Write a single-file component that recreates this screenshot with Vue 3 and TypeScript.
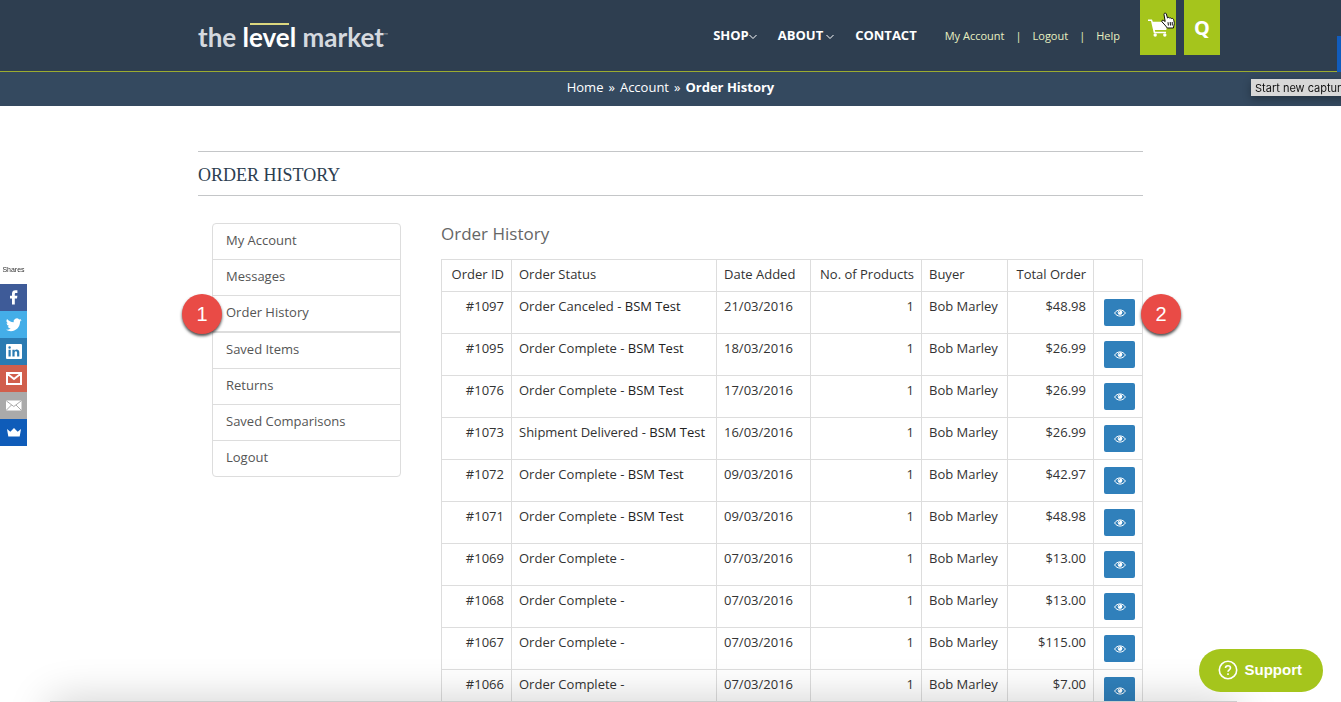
<script setup lang="ts">
interface Order {
  id: string
  status: string
  note: string
  date: string
  total: string
}

const orders: Order[] = [
  { id: '#1097', status: 'Order Canceled - ', note: 'BSM Test', date: '21/03/2016', total: '$48.98' },
  { id: '#1095', status: 'Order Complete - ', note: 'BSM Test', date: '18/03/2016', total: '$26.99' },
  { id: '#1076', status: 'Order Complete - ', note: 'BSM Test', date: '17/03/2016', total: '$26.99' },
  { id: '#1073', status: 'Shipment Delivered - ', note: 'BSM Test', date: '16/03/2016', total: '$26.99' },
  { id: '#1072', status: 'Order Complete - ', note: 'BSM Test', date: '09/03/2016', total: '$42.97' },
  { id: '#1071', status: 'Order Complete - ', note: 'BSM Test', date: '09/03/2016', total: '$48.98' },
  { id: '#1069', status: 'Order Complete -', note: '', date: '07/03/2016', total: '$13.00' },
  { id: '#1068', status: 'Order Complete -', note: '', date: '07/03/2016', total: '$13.00' },
  { id: '#1067', status: 'Order Complete -', note: '', date: '07/03/2016', total: '$115.00' },
  { id: '#1066', status: 'Order Complete -', note: '', date: '07/03/2016', total: '$7.00' },
]

const accountLinks: string[] = [
  'My Account',
  'Messages',
  'Order History',
  'Saved Items',
  'Returns',
  'Saved Comparisons',
  'Logout',
]
</script>

<template>
  <div class="page">
    <header class="header">
      <div class="container header-row">
        <a class="logo" href="#"><span>the </span><span class="level">level</span><span> market</span><sup>™</sup></a>
        <nav class="main-nav">
          <a class="shop" href="#">SHOP<svg viewBox="0 0 8 6"><path d="M.5 1 4 4.5 7.500 1" /></svg></a>
          <a class="about" href="#">ABOUT<svg viewBox="0 0 8 6"><path d="M.5 1 4 4.500 7.500 1" /></svg></a>
          <a class="contact" href="#">CONTACT</a>
        </nav>
        <nav class="user-nav">
          <a href="#">My Account</a><i>|</i><a href="#">Logout</a><i>|</i><a href="#">Help</a>
        </nav>
        <div class="tools">
          <button class="tool" type="button" aria-label="Cart">
            <svg class="cart" viewBox="0 0 20 18">
              <path d="M0 .5h4l.8 2.200H19.500L18.300 11H6.800l.4 1.700H18v1.500H5.800L3 2H0z" />
              <circle cx="7.200" cy="16" r="1.700" />
              <circle cx="16.800" cy="16" r="1.700" />
            </svg>
            <svg class="pointer" viewBox="0 0 14 17">
              <path d="M3 2.500c-.2-1.600 1.800-2 2.300-.6L6.500 6c.6-.9 1.700-.6 2 .1.700-.6 1.700-.2 1.900.5.9-.5 1.900 0 2.100.8.500 1.700 1.200 3.800.5 5.700l-.6 2.900H6.300C5 13.800 3 12.200 1 9.900c-1-1.300.6-2.100 1.600-1.400l1.600 1z" />
              <path d="M7 10.200l.4 3.300M9.200 10l.3 3.500M11.200 10l.1 3.500" />
            </svg>
          </button>
          <button class="tool" type="button">Q</button>
        </div>
      </div>
    </header>

    <nav class="crumbs" aria-label="Breadcrumb">
      <a href="#">Home</a><span>»</span><a href="#">Account</a><span>»</span><strong>Order History</strong>
    </nav>

    <main class="container">
      <h1>ORDER HISTORY</h1>
      <div class="columns">
        <ul class="side">
          <li v-for="(link, i) in accountLinks" :key="link" :class="{ current: i === 2 }">
            <a href="#">{{ link }}</a>
            <span v-if="i === 2" class="marker marker-left">1</span>
          </li>
        </ul>
        <section class="history">
          <h2>Order History</h2>
          <table>
            <colgroup>
              <col class="c-id" /><col /><col class="c-date" /><col class="c-count" />
              <col class="c-buyer" /><col class="c-total" /><col class="c-view" />
            </colgroup>
            <thead>
              <tr>
                <th class="right">Order ID</th>
                <th>Order Status</th>
                <th>Date Added</th>
                <th class="right">No. of Products</th>
                <th>Buyer</th>
                <th class="right">Total Order</th>
                <th></th>
              </tr>
            </thead>
            <tbody>
              <tr v-for="(o, i) in orders" :key="o.id">
                <td class="right">{{ o.id }}</td>
                <td>{{ o.status }}<span class="note">{{ o.note }}</span></td>
                <td>{{ o.date }}</td>
                <td class="right">1</td>
                <td>Bob Marley</td>
                <td class="right">{{ o.total }}</td>
                <td class="view-cell">
                  <a class="view" href="#" :aria-label="'View ' + o.id">
                    <svg viewBox="0 0 12 8">
                      <path d="M.6 4C3.200-.1 8.800-.1 11.400 4 8.800 8.100 3.200 8.100.6 4z" />
                      <circle cx="6" cy="3.600" r="2.300" />
                      <path class="glint" d="M4.700 3.600c0-.8.600-1.300 1.300-1.300" />
                    </svg>
                  </a>
                  <span v-if="i === 0" class="marker marker-right">2</span>
                </td>
              </tr>
            </tbody>
          </table>
        </section>
      </div>
    </main>

    <aside class="share">
      <p>Shares</p>
      <a class="fb" href="#" aria-label="Facebook">
        <svg viewBox="0 0 27 27"><path d="M12 20.500V14.500h-2V11.800h2V9.800c0-2.400 1.300-3.500 3.400-3.500h2V9h-1.400c-.9 0-1.200.4-1.200 1.200v1.600h2.600l-.4 2.700h-2.200v6z" /></svg>
      </a>
      <a class="tw" href="#" aria-label="Twitter">
        <svg viewBox="0 0 24 24"><path transform="translate(5.300 5.300) scale(.58)" d="M23.950 4.570a10 10 0 0 1-2.820.77 4.960 4.960 0 0 0 2.160-2.720c-.95.550-2 .95-3.130 1.180a4.920 4.920 0 0 0-8.380 4.480C7.690 8.090 4.070 6.130 1.640 3.160a4.920 4.920 0 0 0 1.520 6.570 4.900 4.900 0 0 1-2.230-.61v.06a4.920 4.920 0 0 0 3.950 4.830 5 5 0 0 1-2.210.08 4.940 4.940 0 0 0 4.600 3.420A9.870 9.870 0 0 1 0 19.540a14 14 0 0 0 7.550 2.210c9.050 0 14-7.500 14-13.980 0-.21 0-.42-.02-.63a9.940 9.940 0 0 0 2.460-2.550z" /></svg>
      </a>
      <a class="in" href="#" aria-label="LinkedIn">
        <svg viewBox="0 0 27 27"><path fill-rule="evenodd" d="M7 6h14a1 1 0 0 1 1 1v13a1 1 0 0 1-1 1H7a1 1 0 0 1-1-1V7a1 1 0 0 1 1-1zm1.500 5.700v6.800h2.200v-6.800zM9.600 8.300a1.200 1.200 0 1 0 0 2.500 1.200 1.200 0 0 0 0-2.500zm2.800 3.400v6.800h2.200v-3.600c0-2 2.500-2.100 2.500 0v3.600h2.200v-4.200c0-3.300-3.500-3.400-4.700-1.600v-1z" /></svg>
      </a>
      <a class="gm" href="#" aria-label="Gmail">
        <svg class="line" viewBox="0 0 27 27"><path d="M7 8h14v11H7zM7 8.500l7 5.500 7-5.500" /></svg>
      </a>
      <a class="ml" href="#" aria-label="Email">
        <svg viewBox="0 0 27 27"><rect x="6" y="8.500" width="15.500" height="10" rx="1" /><path class="fold" d="M6.500 9l7.300 5.500L21 9M6.500 18l5-5M21 18l-5-5" /></svg>
      </a>
      <a class="sm" href="#" aria-label="SumoMe">
        <svg viewBox="0 0 27 27"><path d="M7 10l3.300 2.800L14 9l3.700 3.800L21 10l-1.300 7.500H8.300z" /></svg>
      </a>
    </aside>

    <div class="edge-tab"></div>
    <div class="tooltip" role="tooltip">Start new capture</div>
    <div class="bottom-shade"></div>

    <button class="support" type="button">
      <svg viewBox="0 0 20 20"><circle cx="10" cy="10" r="8.700" /><path d="M7.500 8.100c0-3.300 5-3.100 5-.2 0 1.900-2.500 1.900-2.500 3.800M10 13.300v1.700" /></svg>
      Support
    </button>
  </div>
</template>

<style>
body {
  margin: 0;
  background: #fff;
}
</style>

<style scoped>
.page {
  position: relative;
  height: 100vh;
  overflow: hidden;
  font: 13px/18px "Open Sans", "Noto Sans", sans-serif;
  color: #333;
}
a {
  color: inherit;
  text-decoration: none;
}
button {
  border: 0;
  padding: 0;
  font: inherit;
}
.container {
  box-sizing: border-box;
  width: 100%;
  max-width: 945px;
  margin: 0 auto;
}
.header {
  height: 71px;
  background: #2e3e50;
  border-bottom: 1px solid #9bab30;
}
.header-row {
  display: flex;
  align-items: flex-start;
  color: #fff;
}
.logo {
  margin-right: auto;
  padding-top: 22px;
  font: bold 26px/30px Lato, sans-serif;
  color: #d5d9df;
  white-space: pre;
}
.logo .level {
  position: relative;
  color: #fff;
}
.logo .level::before {
  content: "";
  position: absolute;
  top: 2px;
  left: 7px;
  right: 7px;
  height: 2px;
  background: #dbd77f;
}
.logo sup {
  font-size: 6px;
  line-height: 6px;
  color: #8c96a1;
}
.main-nav {
  display: flex;
  gap: 21px;
  padding-top: 26px;
  margin-right: 28px;
  font-weight: bold;
}
.main-nav svg {
  width: 8px;
  height: 6px;
  fill: none;
  stroke: #fff;
}
.about svg {
  margin-left: 3px;
}
.user-nav {
  display: flex;
  gap: 11px;
  padding-top: 27px;
  margin-right: 20px;
  font-size: 11px;
  color: #e8f0c0;
}
.user-nav i {
  font-style: normal;
}
.tools {
  display: flex;
  gap: 8px;
  margin-right: -77px;
}
.tool {
  position: relative;
  width: 36px;
  height: 55px;
  background: #a5c51c;
  color: #fff;
  font: bold 20px/55px "Noto Sans", sans-serif;
}
.cart {
  display: block;
  width: 20px;
  height: 18px;
  margin: 0 auto;
  fill: #fff;
}
.pointer {
  position: absolute;
  left: 21px;
  top: 12px;
  width: 14px;
  height: 17px;
  fill: #fff;
  stroke: #111;
}
.crumbs {
  display: flex;
  justify-content: center;
  gap: 5px;
  height: 27px;
  padding-top: 7px;
  background: #34495f;
  color: #fff;
  line-height: 16px;
}
h1 {
  margin: 45px 0 27px;
  border: solid #c4c6c8;
  border-width: 1px 0;
  padding: 9px 0 6px;
  font: 18px/28px "Liberation Serif", serif;
  color: #2c3e50;
}
.columns {
  display: flex;
  align-items: flex-start;
  gap: 40px;
  padding-left: 14px;
}
.side {
  box-sizing: border-box;
  flex: 0 0 189px;
  margin: 0;
  padding: 0;
  list-style: none;
  border: 1px solid #ddd;
  border-radius: 4px;
  color: #555;
}
.side li {
  position: relative;
  border-bottom: 1px solid #ddd;
}
.side li.current {
  border-bottom-width: 2px;
}
.side li:last-child {
  border-bottom: 0;
}
.side a {
  display: block;
  padding: 7px 13px 10px;
}
.history {
  flex: 1;
  min-width: 0;
}
h2 {
  margin: 0 0 14px;
  font-size: 17px;
  font-weight: normal;
  line-height: 22px;
  color: #666;
}
table {
  width: 100%;
  table-layout: fixed;
  border-collapse: collapse;
}
.c-id { width: 70px; }
.c-date { width: 94px; }
.c-count { width: 111px; }
.c-buyer { width: 86px; }
.c-total { width: 86px; }
.c-view { width: 49px; }
th,
td {
  box-sizing: border-box;
  border: 1px solid #ddd;
  padding: 5px 7px 8px;
  font-weight: normal;
  text-align: left;
  vertical-align: top;
  white-space: nowrap;
}
td {
  height: 42px;
}
.right {
  text-align: right;
}
.note {
  color: #222;
}
.view-cell {
  position: relative;
  padding: 7px 7px 7px 10px;
}
.view {
  display: flex;
  align-items: center;
  justify-content: center;
  height: 27px;
  border-radius: 2px;
  background: #3080bb;
}
.view svg {
  width: 12px;
  height: 8px;
  fill: none;
  stroke: #fff;
}
.view circle {
  fill: #fff;
  stroke: none;
}
.view .glint {
  stroke: #3080bb;
  stroke-width: .6;
}
.marker {
  position: absolute;
  width: 40px;
  height: 40px;
  border-radius: 50%;
  background: #e94b46;
  box-shadow: 0 2px 3px rgba(0, 0, 0, .7);
  color: #fff;
  font: 20px/40px "Liberation Sans", Arial, sans-serif;
  text-align: center;
}
.marker-left {
  left: -31px;
  top: -2px;
}
.marker-right {
  left: 47px;
  top: 2px;
}
.share {
  position: fixed;
  left: 0;
  top: 264px;
  width: 27px;
}
.share p {
  margin: 0;
  height: 20px;
  font: 7px/11px "Liberation Sans", Arial, sans-serif;
  text-align: center;
}
.share a {
  display: block;
  height: 27px;
}
.share svg {
  display: block;
  width: 27px;
  height: 27px;
  fill: #fff;
}
.share .line {
  fill: none;
  stroke: #fff;
  stroke-width: 2;
}
.share .fold {
  fill: none;
  stroke: #aaa;
}
.fb { background: #3e5b98; }
.tw { background: #44aee8; }
.in { background: #2b7bb2; }
.gm { background: #d15f4c; }
.ml { background: #aaa; }
.sm { background: #0f5cb9; }
.edge-tab {
  position: fixed;
  right: 0;
  top: 36px;
  width: 4px;
  height: 36px;
  background: #115cbd;
}
.tooltip {
  position: absolute;
  left: calc(100% - 90px);
  top: 79px;
  padding: 1px 4px 0;
  background: #d8d8d8;
  box-shadow: 0 3px 8px rgba(0, 0, 0, .3);
  color: #111;
  font: 11px/16px Inter, sans-serif;
  white-space: nowrap;
}
.bottom-shade {
  position: fixed;
  left: 50px;
  right: 104px;
  top: calc(100% - 1px);
  height: 40px;
  background: #ccc;
  box-shadow: 0 0 44px rgba(0, 0, 0, .2);
}
.support {
  position: fixed;
  right: 18px;
  bottom: 10px;
  display: flex;
  align-items: center;
  gap: 7px;
  height: 43px;
  padding: 0 21px 2px 19px;
  border-radius: 22px;
  background: #a5c51c;
  color: #fff;
  font: bold 15px/20px "Liberation Sans", Arial, sans-serif;
}
.support svg {
  width: 20px;
  height: 20px;
  fill: none;
  stroke: #fff;
  stroke-width: 1.600;
}
</style>
